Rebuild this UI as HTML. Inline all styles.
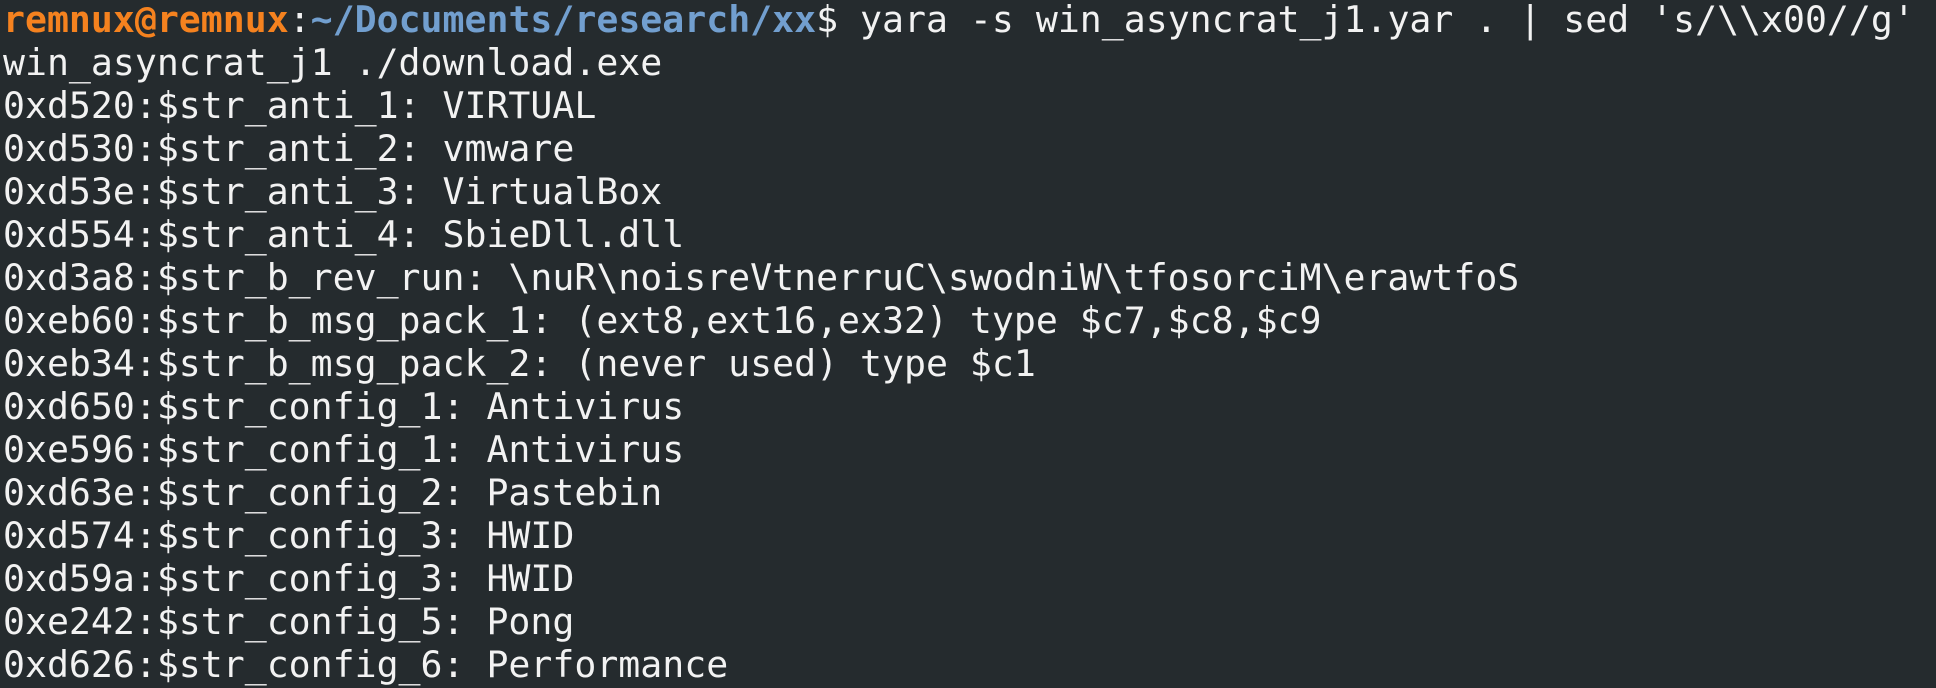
<!DOCTYPE html>
<html><head><meta charset="utf-8"><style>
html,body{margin:0;padding:0;background:#252b2e;width:1936px;height:688px;overflow:hidden}
pre{margin:0;padding:0 0 0 3px;font-family:"DejaVu Sans Mono","Liberation Mono",monospace;font-size:36.5px;line-height:43px;color:#f2f2f2;position:relative;top:-2px}
.o{color:#f5821f;font-weight:bold}.b{color:#729fcf;font-weight:bold}
</style></head><body><pre><span class="o">remnux@remnux</span>:<span class="b">~/Documents/research/xx</span>$ yara -s win_asyncrat_j1.yar . | sed 's/\\x00//g'
win_asyncrat_j1 ./download.exe
0xd520:$str_anti_1: VIRTUAL
0xd530:$str_anti_2: vmware
0xd53e:$str_anti_3: VirtualBox
0xd554:$str_anti_4: SbieDll.dll
0xd3a8:$str_b_rev_run: \nuR\noisreVtnerruC\swodniW\tfosorciM\erawtfoS
0xeb60:$str_b_msg_pack_1: (ext8,ext16,ex32) type $c7,$c8,$c9
0xeb34:$str_b_msg_pack_2: (never used) type $c1
0xd650:$str_config_1: Antivirus
0xe596:$str_config_1: Antivirus
0xd63e:$str_config_2: Pastebin
0xd574:$str_config_3: HWID
0xd59a:$str_config_3: HWID
0xe242:$str_config_5: Pong
0xd626:$str_config_6: Performance</pre></body></html>
